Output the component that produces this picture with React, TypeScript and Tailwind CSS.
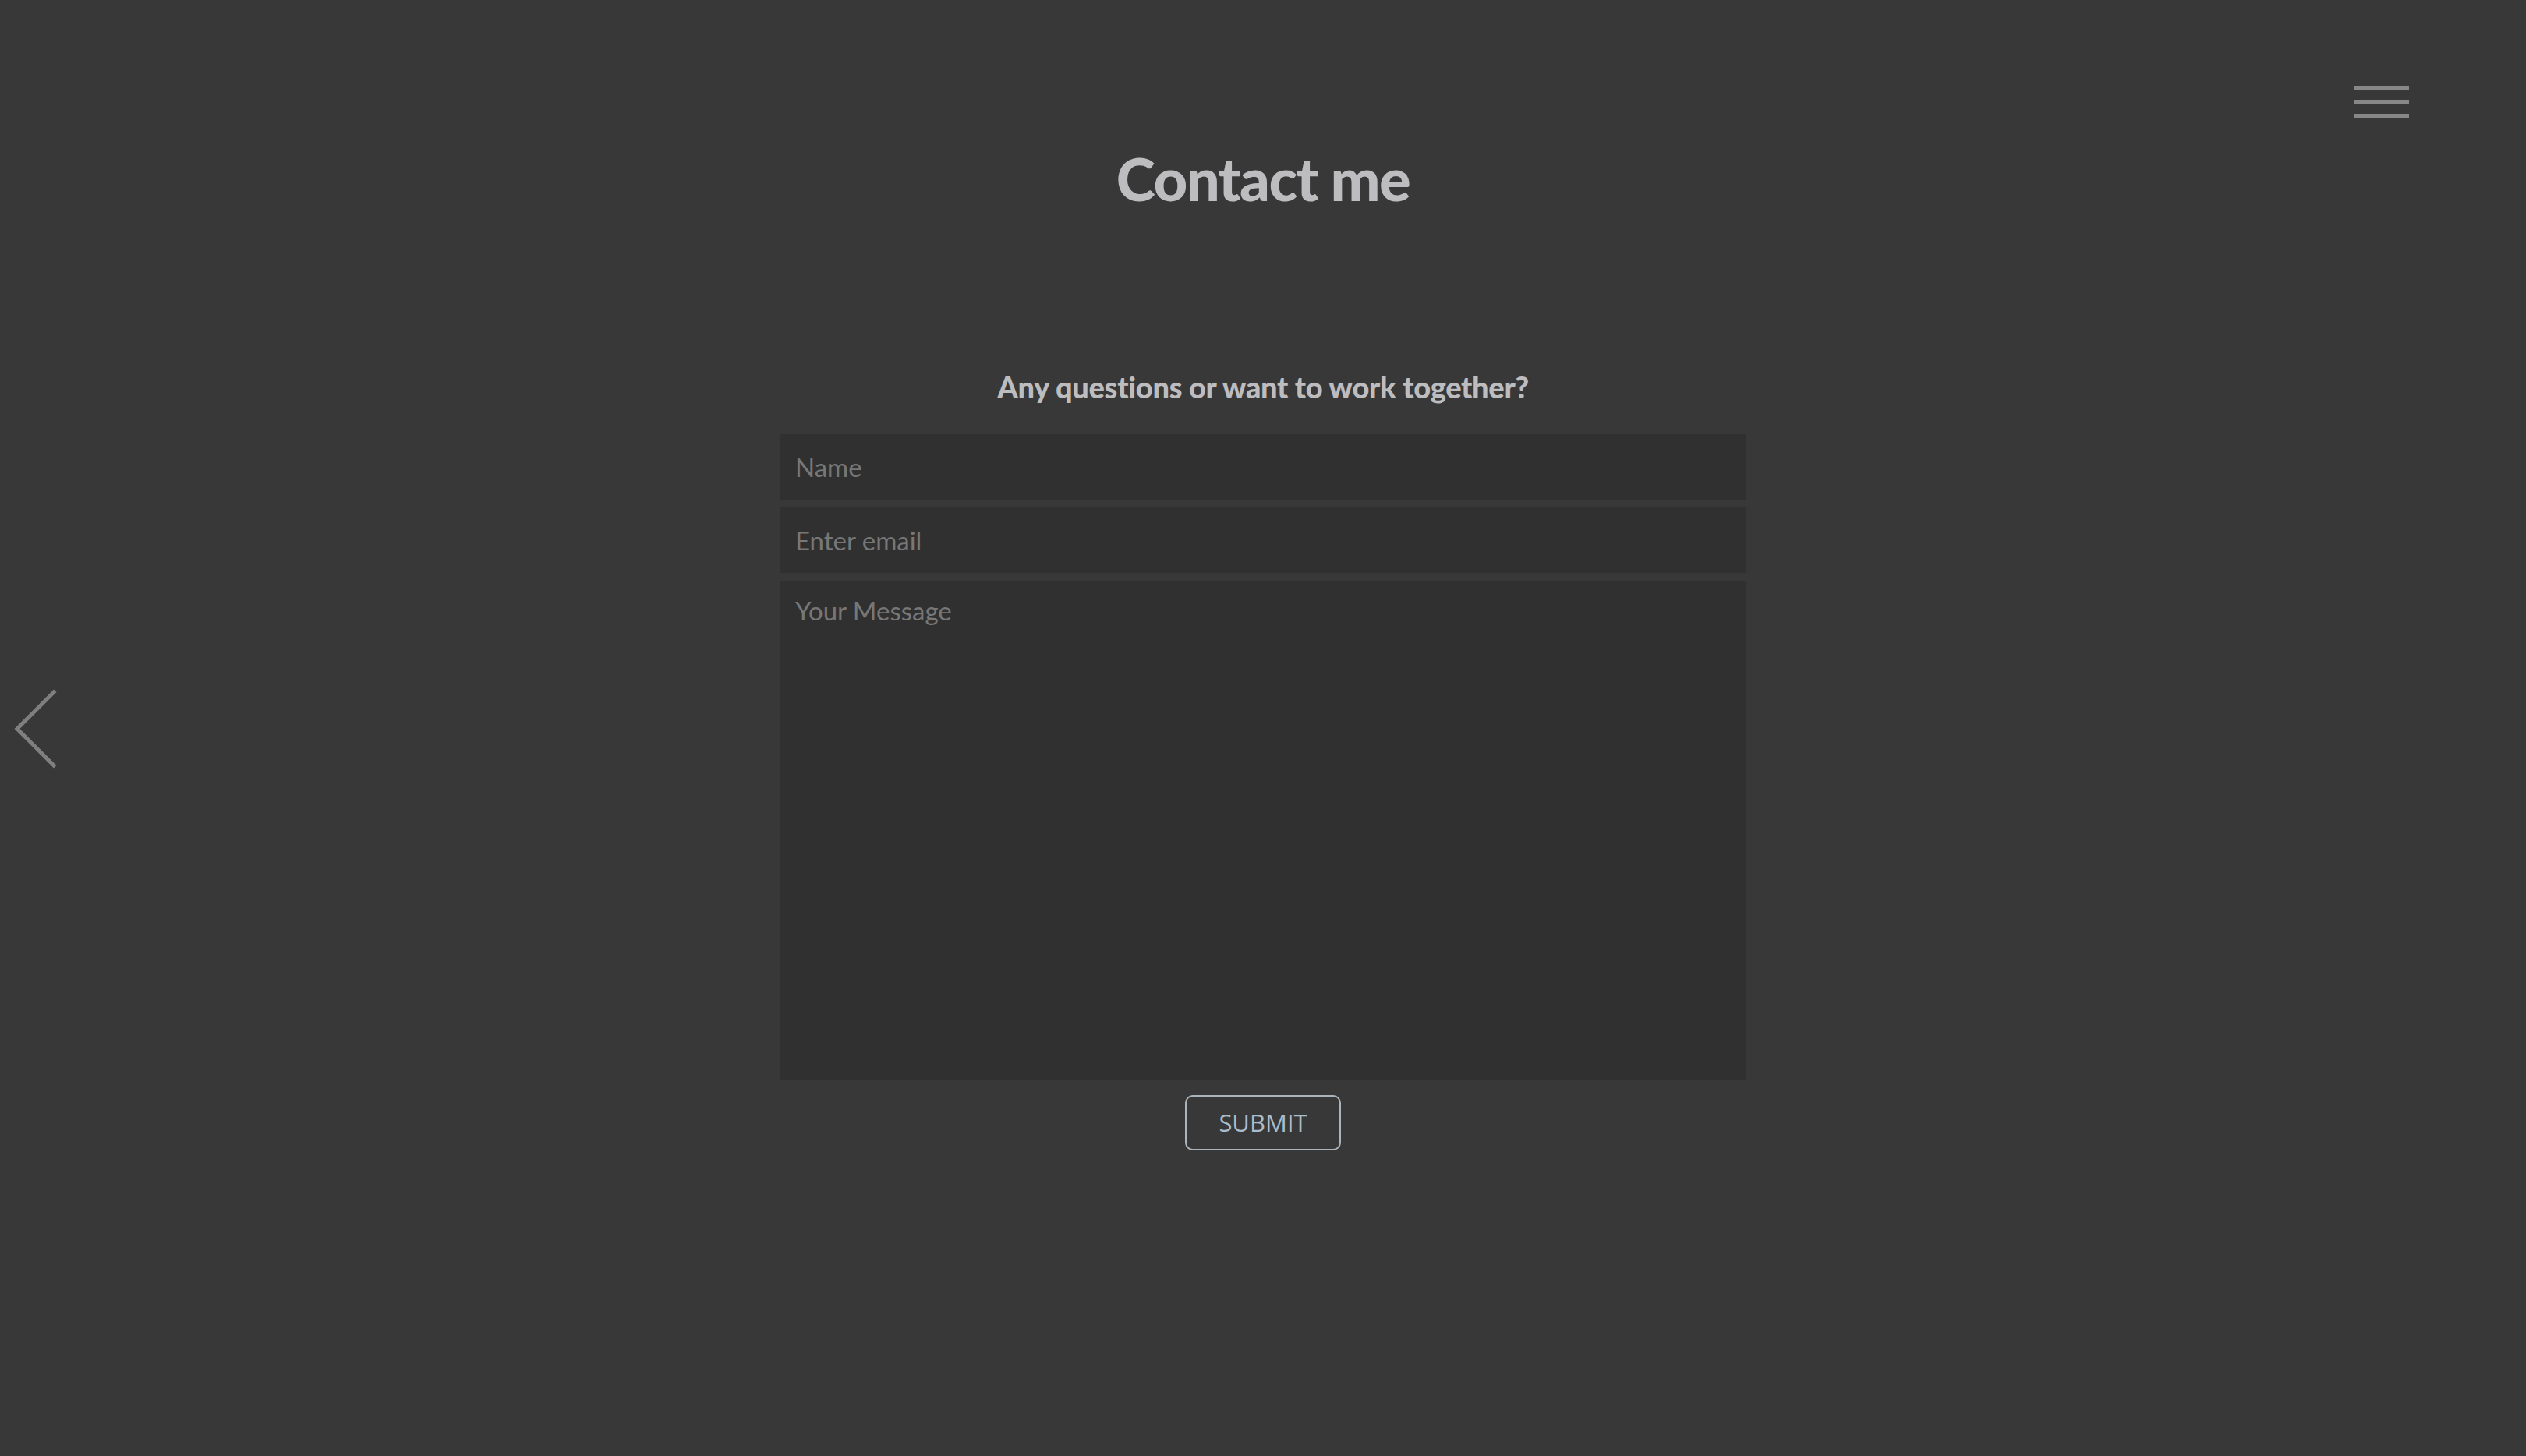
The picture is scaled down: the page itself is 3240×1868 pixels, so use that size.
import { useState } from 'react';

function Hamburger() {
  return (
    <button className="absolute top-[110px] right-[150px] flex flex-col gap-[12px]" aria-label="menu">
      <span className="block w-[70px] h-[6px] bg-[#878787]" />
      <span className="block w-[70px] h-[6px] bg-[#878787]" />
      <span className="block w-[70px] h-[6px] bg-[#878787]" />
    </button>
  );
}

function BackArrow() {
  return (
    <button className="absolute left-[14px] top-[882px]" aria-label="back">
      <svg width="62" height="108" viewBox="0 0 62 108" fill="none">
        <polyline points="55,6 8,53 55,100" stroke="#7f7f7f" strokeWidth="5" strokeLinecap="square" />
      </svg>
    </button>
  );
}

export default function App() {
  const [name, setName] = useState('');
  const [email, setEmail] = useState('');
  const [message, setMessage] = useState('');

  return (
    <div className="relative min-h-screen bg-[#383838]" style={{ fontFamily: 'Lato, "Open Sans", sans-serif' }}>
      <Hamburger />
      <BackArrow />

      <main className="flex flex-col items-center pt-[191px]">
        <h1 className="text-[76px] leading-none font-black text-[#bdbdbf] tracking-[-1.5px]">Contact me</h1>

        <p className="mt-[210px] text-[38px] leading-none font-black text-[#bdbdbf] tracking-[-0.3px]">
          Any questions or want to work together?
        </p>

        <form className="mt-[42px] w-[1240px] flex flex-col gap-[10px]" onSubmit={(e) => e.preventDefault()}>
          <input
            value={name}
            onChange={(e) => setName(e.target.value)}
            placeholder="Name"
            className="h-[84px] bg-[#303030] px-[20px] text-[33px] text-[#bdbdbf] placeholder:text-[#777777] outline-none"
          />
          <input
            value={email}
            onChange={(e) => setEmail(e.target.value)}
            placeholder="Enter email"
            className="h-[84px] bg-[#303030] px-[20px] text-[33px] text-[#bdbdbf] placeholder:text-[#777777] outline-none"
          />
          <textarea
            value={message}
            onChange={(e) => setMessage(e.target.value)}
            placeholder="Your Message"
            className="h-[640px] resize-none bg-[#303030] px-[20px] py-[14px] text-[33px] text-[#bdbdbf] placeholder:text-[#777777] outline-none"
          />
          <button
            type="submit"
            className="self-center mt-[10px] w-[200px] h-[71px] rounded-[10px] border-2 border-[#a9b4bc] text-[31px] text-[#a9bccc]"
            style={{ fontFamily: '"Open Sans", sans-serif' }}
          >
            SUBMIT
          </button>
        </form>
      </main>
    </div>
  );
}
